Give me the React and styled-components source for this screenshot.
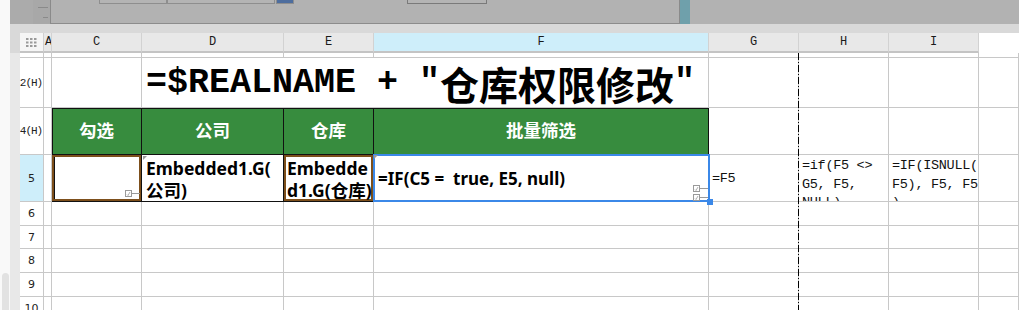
import React from 'react';
import styled, { createGlobalStyle, css } from 'styled-components';

const Global = createGlobalStyle`
  html, body { margin: 0; padding: 0; background: #fff; }
  body { width: 1019px; height: 310px; overflow: hidden; font-family: "Liberation Sans", "Noto Sans CJK SC", sans-serif; }
`;

const Page = styled.div`
  display: flex;
  width: 1019px;
  height: 310px;
  overflow: hidden;
`;

const Gutter = styled.div`
  width: 10px;
  flex: none;
  background: #f9f9f9;
  display: flex;
  flex-direction: column;
`;

const ScrollPill = styled.div`
  margin-top: auto;
  margin-left: 2px;
  width: 7px;
  height: 37px;
  flex: none;
  background: #e2e2e2;
  border-radius: 4px 4px 0 0;
`;

const Main = styled.div`
  flex: 1;
  display: flex;
  flex-direction: column;
  min-width: 0;
`;

const TopArea = styled.div`
  height: 24px;
  flex: none;
  display: flex;
  background: #b2b2b2;
`;

const RulerBlank = styled.div`
  width: 23px;
  background: #ababab;
`;

const Ruler = styled.div`
  width: 17px;
  background: #a8a8a8;
  display: flex;
`;

const Panel = styled.div`
  width: 630px;
  box-sizing: border-box;
  background: #b2b2b2;
  border-left: 1px solid #8a8a8a;
  border-right: 1px solid #8a8a8a;
  border-bottom: 1px solid #8c8c8c;
  display: flex;
  align-items: flex-start;
  padding-left: 48px;
`;

const Field = styled.div`
  box-sizing: border-box;
  width: ${p => p.$w}px;
  margin-left: ${p => p.$ml || 0}px;
  height: 4px;
  border: 1px solid ${p => p.$dark ? '#7a7a7a' : '#8e8e8e'};
  border-top: none;
  background: ${p => p.$blue ? '#4d6d9e' : '#b4b4b4'};
`;

const Teal = styled.div`
  width: 10px;
  background: #6fa0ab;
`;

const Band = styled.div`
  height: 9px;
  flex: none;
  background: #d9d9d9;
`;

const Sheet = styled.div`
  position: relative;
  flex: none;
  display: grid;
  grid-template-columns: 10px 24px 8px 90px 142px 90px 335px 90px 90px 90px 1fr;
  grid-template-rows: 20px 5px 50px 47px 47px 24px 23px 24px 24px 24px;
`;

const SideHead = styled.div`
  background: #d9d9d9;
`;

const SideStrip = styled.div`
  grid-row: 2 / -1;
  grid-column: 1;
  background: #e8e8e8;
`;

const Corner = styled.div`
  box-sizing: border-box;
  background: #f5f5f5;
  border-right: 1px solid #d0d0d0;
  border-bottom: 2px solid #c4c4c4;
  display: flex;
  align-items: center;
  justify-content: center;
`;

const ColHead = styled.div`
  box-sizing: border-box;
  background: ${p => p.$active ? '#ceeefa' : '#e8e8e8'};
  border-right: 1px solid #d2d2d2;
  border-bottom: 2px solid #c4c4c4;
  font-family: "Liberation Mono", monospace;
  font-size: 12px;
  color: #1a1a1a;
  display: flex;
  align-items: center;
  justify-content: ${p => p.$left ? 'flex-start' : 'center'};
  padding-left: ${p => p.$left ? '1px' : '0'};
  padding-bottom: 1px;
  overflow: hidden;
  ${p => p.$blank && css`background: #fff; border-right: none; border-bottom: 2px solid #fff;`}
`;

const RowHead = styled.div`
  box-sizing: border-box;
  grid-column: 2;
  background: ${p => p.$active ? '#ceeefa' : '#fff'};
  border-right: 1px solid #c8c8c8;
  border-bottom: 1px solid #c8c8c8;
  display: flex;
  align-items: center;
  justify-content: center;
  font-family: ${p => p.$mono ? '"Liberation Mono", monospace' : '"DejaVu Sans", sans-serif'};
  font-size: 11px;
  letter-spacing: ${p => p.$mono ? '-1px' : '0'};
  color: #222;
  padding-right: ${p => p.$mono ? '1px' : '0'};
  overflow: hidden;
  white-space: nowrap;
`;

const Cell = styled.div`
  box-sizing: border-box;
  position: relative;
  min-width: 0;
  background: #fff;
  border-right: 1px solid #c8c8c8;
  border-bottom: 1px solid #c8c8c8;
  overflow: hidden;
  ${p => p.$span && css`grid-column: span ${p.$span};`}
`;

const TitleCell = styled(Cell)`
  display: flex;
  align-items: center;
  padding-left: 4px;
  white-space: pre;
  font-family: "Liberation Mono", "Noto Sans CJK SC", monospace;
  font-weight: 700;
  font-size: 35px;
  line-height: 1;
  color: #000;
  padding-top: 1px;
`;

const Han = styled.span`
  font-family: "Noto Sans CJK SC", sans-serif;
  font-size: 39px;
  line-height: 1;
  font-weight: 700;
`;

const GreenCell = styled(Cell)`
  background: #378c3e;
  border-right: 1px solid #111;
  border-bottom: 1px solid #111;
  box-shadow: inset 0 1px 0 #111 ${p => p.$first ? ', inset 1px 0 0 #111' : ''};
  color: #fff;
  font-family: "Noto Sans CJK SC", sans-serif;
  font-weight: 700;
  font-size: 17.5px;
  display: flex;
  align-items: center;
  justify-content: center;
  padding-bottom: 3px;
`;

const DataCell = styled(Cell)`
  border-right: 1px solid #111;
  border-bottom: 1px solid #111;
  ${p => p.$first && css`box-shadow: inset 1px 0 0 #111;`}
  ${p => p.$brown && css`box-shadow: inset 0 0 0 2px #7d4f1b ${p.$first ? ', inset 3px 0 0 #111' : ''};`}
  font-family: "Noto Sans", "Noto Sans CJK SC", sans-serif;
  font-weight: 700;
  font-size: 17.5px;
  line-height: 22px;
  color: #000;
  padding: 1px 0 0 ${p => p.$pad || 4}px;
  display: flex;
  flex-direction: column;
  justify-content: center;
  white-space: pre;
`;

const Selected = styled(Cell)`
  overflow: visible;
  z-index: 2;
  border-right: none;
  border-bottom: none;
  box-shadow: inset 0 0 0 2px #3b88e8;
  margin: -1px -1px 0 -1px;
  display: flex;
  align-items: center;
  padding: 1px 0 0 5px;
  font-family: "Noto Sans", sans-serif;
  font-weight: 700;
  font-size: 17px;
  color: #000;
  white-space: pre;
`;

const Handle = styled.div`
  position: absolute;
  right: -3px;
  bottom: -3px;
  width: 6px;
  height: 6px;
  background: #3b88e8;
`;

const Marks = styled.div`
  position: absolute;
  right: ${p => p.$right || 2}px;
  bottom: ${p => p.$bottom || 3}px;
  display: flex;
  flex-direction: column;
  gap: 2px;
`;

const CornerTick = styled.div`
  position: absolute;
  left: 1px;
  top: 1px;
  width: 0;
  height: 0;
  border-top: 4px solid #9a9a9a;
  border-right: 4px solid transparent;
`;

const Formula = styled(Cell)`
  font-family: "Liberation Mono", monospace;
  font-size: 13.5px;
  letter-spacing: -0.3px;
  line-height: 18.5px;
  color: #111;
  padding: ${p => p.$center ? '3px 0 0 3px' : '2px 0 0 3px'};
  display: flex;
  flex-direction: column;
  justify-content: ${p => p.$center ? 'center' : 'flex-start'};
  white-space: pre;
`;

const Line = styled.span`
  display: block;
`;

const PageBreak = styled.div`
  position: absolute;
  left: 788px;
  top: 20px;
  bottom: 0;
  width: 1px;
  background: repeating-linear-gradient(to bottom, #000 0 7px, transparent 7px 9px, #000 9px 10px, transparent 10px 12px);
  z-index: 3;
`;

const DotsIcon = () => (
  <svg width="11" height="9" viewBox="0 0 11 9">
    {[0, 1, 2].map(r => [0, 1, 2].map(c => (
      <rect key={`${r}${c}`} x={c * 4} y={r * 3.5} width="2.5" height="2" fill="#9a9a9a" />
    )))}
  </svg>
);

const RulerTicks = () => (
  <svg width="17" height="24" viewBox="0 0 17 24">
    <line x1="5" y1="7.5" x2="15" y2="7.5" stroke="#8a8a8a" strokeWidth="1" />
    <line x1="10" y1="17.5" x2="15" y2="17.5" stroke="#8a8a8a" strokeWidth="1" />
  </svg>
);

const CheckMark = () => (
  <svg width="15" height="7" viewBox="0 0 15 7">
    <rect x="0.5" y="0.5" width="6" height="6" fill="#fff" stroke="#9a9a9a" />
    <path d="M2 4.5 L3 5.5 L5 2" fill="none" stroke="#9a9a9a" strokeWidth="0.8" />
    <line x1="7" y1="3.5" x2="15" y2="3.5" stroke="#9a9a9a" />
  </svg>
);

const Blank = ({ n }) => Array.from({ length: n }, (_, i) => <Cell key={i} />);

const EmptyRow = ({ label }) => (
  <>
    <RowHead>{label}</RowHead>
    <Blank n={9} />
  </>
);

export default function App() {
  return (
    <Page>
      <Global />
      <Gutter>
        <ScrollPill />
      </Gutter>
      <Main>
        <TopArea>
          <RulerBlank />
          <Ruler><RulerTicks /></Ruler>
          <Panel>
            <Field $w={68} />
            <Field $w={108} />
            <Field $w={18} $ml={1} $blue />
            <Field $w={80} $ml={113} $dark />
          </Panel>
          <Teal />
        </TopArea>
        <Band />
        <Sheet>
          <SideHead />
          <Corner><DotsIcon /></Corner>
          <ColHead $left>A</ColHead>
          <ColHead>C</ColHead>
          <ColHead>D</ColHead>
          <ColHead>E</ColHead>
          <ColHead $active>F</ColHead>
          <ColHead>G</ColHead>
          <ColHead>H</ColHead>
          <ColHead>I</ColHead>
          <ColHead $blank />

          <SideStrip />

          <EmptyRow label="" />

          <RowHead $mono>2(H)</RowHead>
          <Cell />
          <Cell />
          <TitleCell $span={3}>=$REALNAME + "<Han>仓库权限修改</Han>"</TitleCell>
          <Blank n={4} />

          <RowHead $mono>4(H)</RowHead>
          <Cell />
          <GreenCell $first>勾选</GreenCell>
          <GreenCell>公司</GreenCell>
          <GreenCell>仓库</GreenCell>
          <GreenCell>批量筛选</GreenCell>
          <Blank n={4} />

          <RowHead $active>5</RowHead>
          <Cell />
          <DataCell $first $brown>
            <Marks $right={1} $bottom={4}><CheckMark /></Marks>
          </DataCell>
          <DataCell>
            <CornerTick />
            <Line>Embedded1.G(</Line>
            <Line>公司)</Line>
          </DataCell>
          <DataCell $brown $pad={3}>
            <Line>Embedde</Line>
            <Line>d1.G(仓库)</Line>
          </DataCell>
          <Selected>
            <CornerTick />
            =IF(C5 =  true, E5, null)
            <Marks $right={2} $bottom={1}>
              <CheckMark />
              <CheckMark />
            </Marks>
            <Handle />
          </Selected>
          <Formula $center>=F5</Formula>
          <Formula>
            <Line>=if(F5 &lt;&gt;</Line>
            <Line>G5, F5,</Line>
            <Line>NULL)</Line>
          </Formula>
          <Formula>
            <Line>=IF(ISNULL(</Line>
            <Line>F5), F5, F5</Line>
            <Line>)</Line>
          </Formula>
          <Cell />

          <EmptyRow label="6" />
          <EmptyRow label="7" />
          <EmptyRow label="8" />
          <EmptyRow label="9" />
          <EmptyRow label="10" />

          <PageBreak />
        </Sheet>
      </Main>
    </Page>
  );
}
